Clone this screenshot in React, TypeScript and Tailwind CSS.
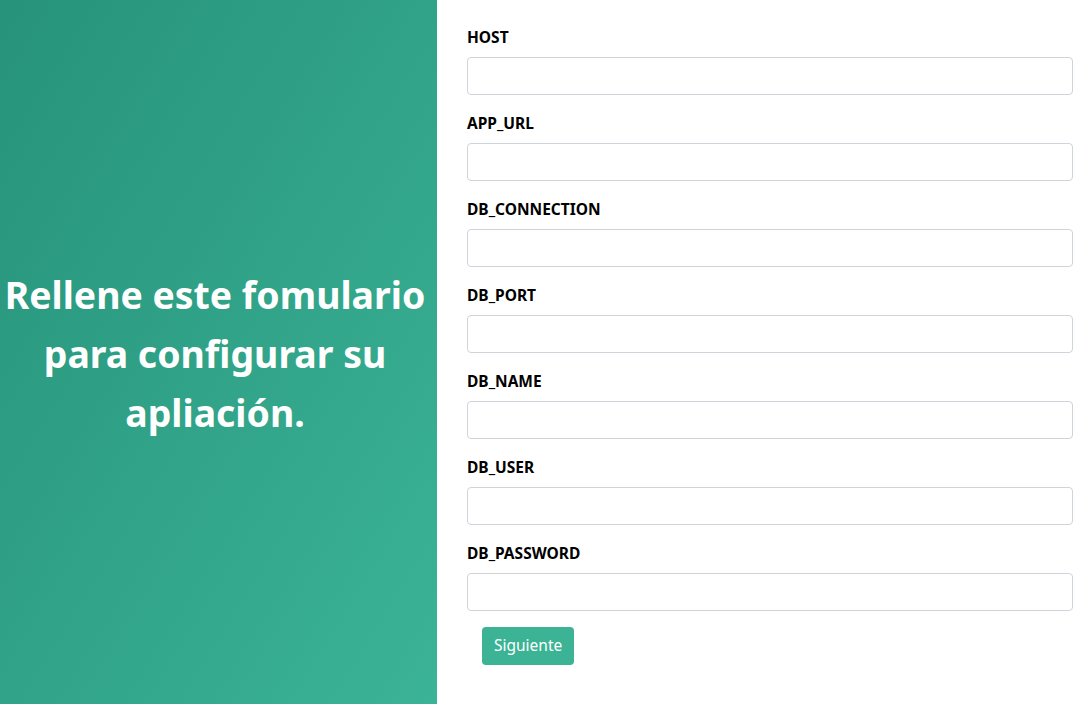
export default function App() {
  const fields = ['HOST', 'APP_URL', 'DB_CONNECTION', 'DB_PORT', 'DB_NAME', 'DB_USER', 'DB_PASSWORD'];

  return (
    <div className="flex h-[704px] w-full bg-white" style={{ fontFamily: '"Noto Sans", "Open Sans", sans-serif' }}>
      <div className="flex w-[437px] shrink-0 items-center justify-center bg-gradient-to-br from-[#26937a] to-[#3bb396] pr-[7px] pt-[2px]">
        <h1 className="text-center text-[37.4px] font-bold leading-[59px] text-white">
          Rellene este fomulario para configurar su apliación.
        </h1>
      </div>
      <div className="flex-1 pl-[30px] pr-[13px] pt-[25px]">
        {fields.map((f) => (
          <div key={f} className="mb-4">
            <label className="mb-2 block text-[15.5px] font-bold leading-6 text-black">{f}</label>
            <input
              type="text"
              className="block h-[38px] w-full rounded border border-[#ced4da] bg-white px-3 outline-none"
            />
          </div>
        ))}
        <button className="ml-[15px] h-[38px] rounded bg-[#3bb394] px-3 text-[15.5px] text-white">Siguiente</button>
      </div>
    </div>
  );
}
